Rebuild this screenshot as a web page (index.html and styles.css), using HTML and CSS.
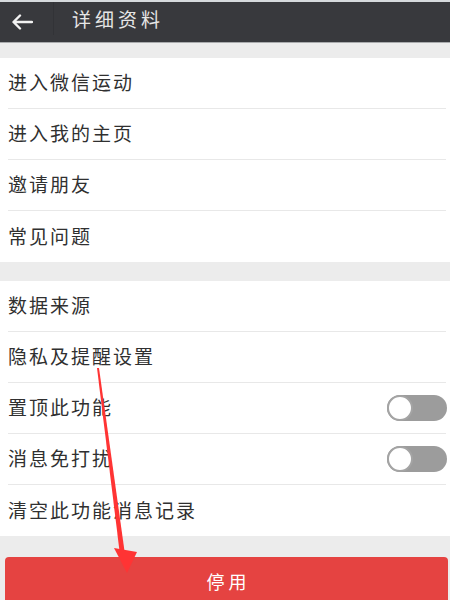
FILE: index.html
```html
<!DOCTYPE html>
<html lang="zh-CN">
<head>
    <meta charset="UTF-8">
    <meta name="viewport" content="width=device-width, initial-scale=1.0">
    <title>详细资料</title>
    <link rel="stylesheet" href="styles.css">
</head>
<body>

<div class="header">
    <div class="back">
        <svg width="22" height="16" viewBox="0 0 22 16">
            <path d="M21 8H3M9 1.5L2.5 8L9 14.5" fill="none" stroke="#f2f2f2" stroke-width="2.4" stroke-linecap="round" stroke-linejoin="round"/>
        </svg>
    </div>
    <div class="title">详细资料</div>
</div>

<div class="group first">
    <div class="row"><span>进入微信运动</span></div>
    <div class="row"><span>进入我的主页</span></div>
    <div class="row"><span>邀请朋友</span></div>
    <div class="row"><span>常见问题</span></div>
</div>

<div class="group">
    <div class="row"><span>数据来源</span></div>
    <div class="row"><span>隐私及提醒设置</span></div>
    <div class="row"><span>置顶此功能</span><div class="switch"><i></i></div></div>
    <div class="row"><span>消息免打扰</span><div class="switch"><i></i></div></div>
    <div class="row"><span>清空此功能消息记录</span></div>
</div>

<button class="stop">停用</button>

<!-- annotation arrow drawn over the screenshot -->
<svg class="arrow" width="450" height="600" viewBox="0 0 450 600">
    <polygon points="97,368 99,368 124.5,551 119.5,551" fill="#ff3434"/>
    <polygon points="114,548 137,552 127,573" fill="#ff3434"/>
</svg>

</body>
</html>
```

FILE: styles.css
```css
* {
    box-sizing: border-box;
    margin: 0;
    padding: 0;
}

body {
    width: 450px;
    height: 600px;
    overflow: hidden;
    position: relative;
    background: #ececec;
    font-family: "Noto Sans CJK SC", "Noto Sans", sans-serif;
    color: #333;
}

.header {
    height: 43px;
    border-top: 2px solid #d6dadd;
    border-bottom: 1px solid #a9abad;
    background: #38393d;
    display: flex;
    align-items: center;
    padding-bottom: 7px;
}

.back {
    width: 54px;
    height: 100%;
    display: flex;
    align-items: center;
    padding-left: 11px;
    padding-top: 7px;
    border-right: 1px solid #323337;
}

.title {
    margin-left: 18px;
    font-size: 19px;
    letter-spacing: 4px;
    color: #e6e6e6;
}

.group {
    background: #fff;
    margin-top: 19px;
}

.group.first {
    margin-top: 15px;
}

.row {
    height: 51px;
    margin-left: 8px;
    margin-right: 4px;
    padding-bottom: 3px;
    border-bottom: 1px solid #e8e8e8;
    display: flex;
    align-items: center;
    justify-content: space-between;
    font-size: 19px;
    letter-spacing: 2px;
    color: #303030;
}

.row:last-child {
    border-bottom: none;
}

.switch {
    width: 60px;
    height: 26px;
    margin-right: -1px;
    margin-bottom: -3px;
    border-radius: 13px;
    background: #9c9c9c;
    position: relative;
}

.switch i {
    position: absolute;
    left: 0;
    top: 0;
    width: 26px;
    height: 26px;
    border-radius: 50%;
    background: #fff;
    border: 2px solid #a4a4a4;
}

.stop {
    display: block;
    width: 443px;
    height: 50px;
    margin: 21px 0 0 5px;
    border: none;
    border-radius: 4px 4px 0 0;
    background: #e54341;
    color: #fff;
    font-family: "Noto Sans CJK SC", "Noto Sans", sans-serif;
    font-size: 18px;
    letter-spacing: 4px;
    padding-left: 4px;
    padding-bottom: 2px;
}

.arrow {
    position: absolute;
    left: 0;
    top: 0;
    pointer-events: none;
}
```
